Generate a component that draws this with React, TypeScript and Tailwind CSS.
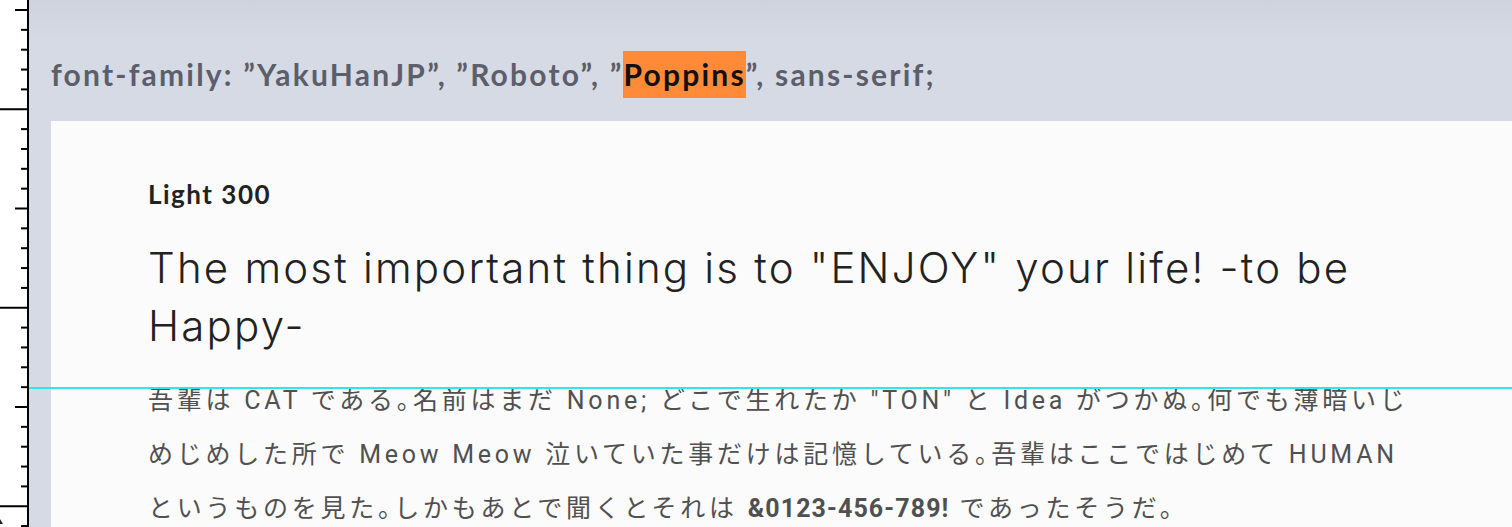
import React from 'react';

const TICK_STEP = 19.85;

function Ruler() {
  const ticks = Array.from({ length: 27 }, (_, i) => {
    const y = 10 + i * TICK_STEP;
    const kind = i % 10 === 5 ? 'major' : i % 10 === 0 ? 'mid' : 'minor';
    const x1 = kind === 'major' ? 0 : kind === 'mid' ? 15 : 21;
    return { y, x1 };
  });

  return (
    <div className="w-[29px] h-full shrink-0 bg-white border-r-2 border-black relative">
      <svg width="27" height="527" className="block">
        {ticks.map((t, i) => (
          <line key={i} x1={t.x1} x2={27} y1={t.y} y2={t.y} stroke="#000" strokeWidth={2} />
        ))}
        <path d="M0 519 L3 524 L0 524 Z" fill="#222" />
      </svg>
    </div>
  );
}

export default function App() {
  return (
    <div className="w-[1512px] h-[527px] flex overflow-hidden relative bg-white">
      <Ruler />

      <div className="flex-1 flex flex-col bg-linear-to-b from-[#cfd3de] to-[#d6dae5] to-[8%]">
        <header className="h-[121px] shrink-0 pl-[22px] pt-[51px]">
          <p className="font-['Lato',sans-serif] font-bold text-[30px] leading-[47px] tracking-[2.2px] text-[#5c5e6b] whitespace-nowrap">
            font-family: ”YakuHanJP”, ”Roboto”, ”
            <span className="inline-block h-[47px] bg-[#ff8a37] text-[#111] align-top">Poppins</span>
            ”, sans-serif;
          </p>
        </header>

        <section className="flex-1 ml-[22px] bg-[#fbfbfb] pl-[97px] pt-[58px]">
          <h3 className="font-['Lato',sans-serif] font-bold text-[26px] leading-[30px] text-[#222] tracking-[1.5px]">
            Light 300
          </h3>

          <h2 className="mt-[30px] font-['Inter',sans-serif] font-light text-[42px] leading-[58px] text-[#222] tracking-[2.2px]">
            The most important thing is to "ENJOY" your life! -to be
            <br />
            Happy-
          </h2>

          <p className="mt-[19px] font-['Roboto','Noto_Sans_CJK_JP',sans-serif] [font-feature-settings:'halt'] text-[25px] leading-[54px] tracking-[3.75px] text-[#505050] whitespace-nowrap">
            吾輩は CAT である。名前はまだ None; どこで生れたか "TON" と Idea がつかぬ。何でも薄暗いじ
            <br />
            めじめした所で Meow Meow 泣いていた事だけは記憶している。吾輩はここではじめて HUMAN
            <br />
            というものを見た。しかもあとで聞くとそれは <strong className="font-bold tracking-[1.1px]">&amp;0123-456-789!</strong> であったそうだ。
          </p>
        </section>
      </div>

      <div className="absolute left-[29px] right-0 top-[387px] h-[2px] bg-[#2fe6e8]" />
    </div>
  );
}
